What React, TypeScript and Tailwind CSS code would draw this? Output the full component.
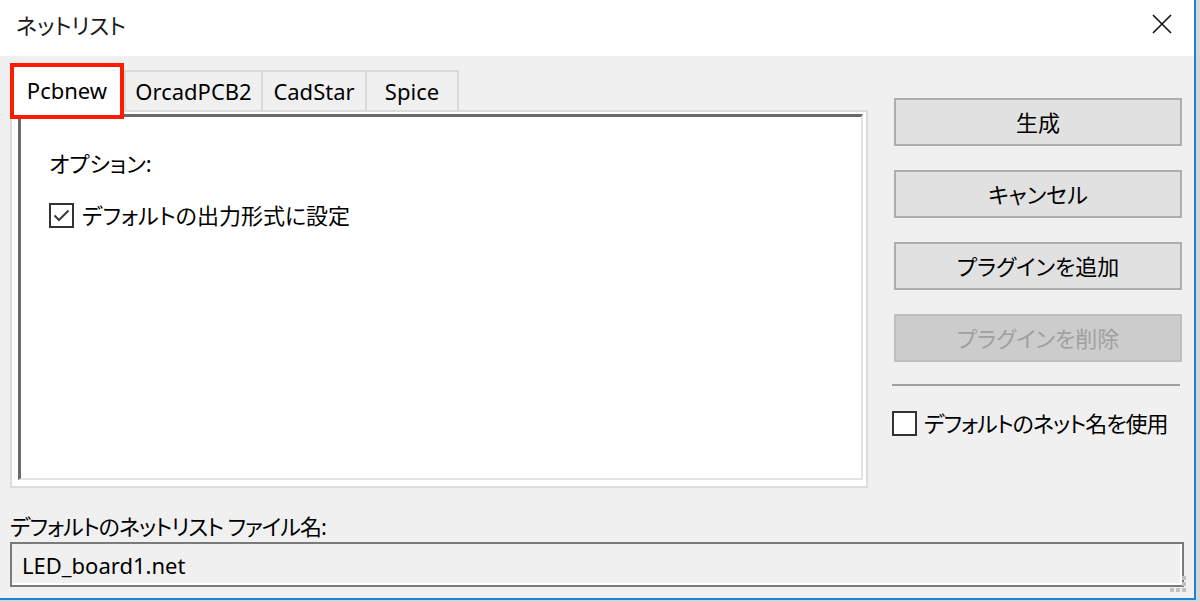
import React from "react";

const jp = "[font-feature-settings:'palt'] whitespace-nowrap";

const Checkbox = ({ checked }: { checked?: boolean }) => (
  <span className="w-[25px] h-[25px] border-2 border-[#333333] bg-white flex items-center justify-center shrink-0">
    {checked && (
      <svg width="17" height="13" viewBox="0 0 17 13">
        <path d="M1.5 6.5 L6 11 L15.5 1.5" fill="none" stroke="#3a3a3a" strokeWidth="2" />
      </svg>
    )}
  </span>
);

const Button = ({ label, disabled }: { label: string; disabled?: boolean }) => (
  <div
    className={
      disabled
        ? "h-[48px] w-[288px] ml-[2px] border-2 border-[#bfbfbf] bg-[#cccccc] text-[#a0a0a0] flex items-center justify-center"
        : "h-[48px] w-[288px] ml-[2px] border-2 border-[#adadad] bg-[#e1e1e1] text-black flex items-center justify-center"
    }
  >
    <span className={jp}>{label}</span>
  </div>
);

const App = () => {
  return (
    <div
      className="w-[1200px] h-[602px] bg-[#d6d6d6] overflow-hidden text-[22px] leading-[26px] text-black"
      style={{ fontFamily: '"Noto Sans", "Noto Sans CJK JP", sans-serif' }}
    >
      <div className="relative w-[1196px] h-[600px] border-r-2 border-b-2 border-[#1883d7] flex flex-col">
        {/* title bar */}
        <div className="h-[56px] bg-white flex items-center justify-between pl-[16px] pr-[22px] shrink-0">
          <span className={jp + " text-[#1a1a1a] -mt-[6px]"}>ネットリスト</span>
          <svg width="20" height="20" viewBox="0 0 20 20" className="-mt-[8px]">
            <path d="M1 1 L19 19 M19 1 L1 19" stroke="#111111" strokeWidth="1.6" />
          </svg>
        </div>

        {/* body */}
        <div className="flex-1 bg-[#f0f0f0] pl-[10px] flex flex-col">
          <div className="flex gap-[24px]">
            {/* left: notebook */}
            <div className="w-[858px] pt-[7px] flex flex-col">
              <div className="flex items-end h-[47px]">
                <div className="relative z-10 w-[114px] h-[56px] -mb-[9px] border-[4px] border-[#ff1a00] bg-white flex justify-center pt-[10px]">
                  Pcbnew
                </div>
                <div className="w-[139px] h-[40px] border-l-2 border-t-2 border-r-2 border-[#d9d9d9] flex items-center justify-center">
                  OrcadPCB2
                </div>
                <div className="w-[104px] h-[40px] border-t-2 border-r-2 border-[#d9d9d9] flex items-center justify-center">
                  CadStar
                </div>
                <div className="w-[92px] h-[40px] border-t-2 border-r-2 border-[#d9d9d9] flex items-center justify-center">
                  Spice
                </div>
              </div>
              <div className="h-[378px] border-2 border-[#dcdcdc] bg-white pl-[6px] pt-[2px] pr-[3px] pb-[6px]">
                <div className="h-full border-t-[3px] border-l-[3px] border-[#6b6b6b] border-r-2 border-b-2 border-r-[#e3e3e3] border-b-[#e3e3e3] pl-[28px] pt-[33px]">
                  <div className={jp}>オプション:</div>
                  <div className="flex items-center gap-[8px] mt-[26px]">
                    <Checkbox checked />
                    <span className={jp}>デフォルトの出力形式に設定</span>
                  </div>
                </div>
              </div>
            </div>

            {/* right: buttons */}
            <div className="w-[290px] pt-[42px] flex flex-col gap-[24px]">
              <Button label="生成" />
              <Button label="キャンセル" />
              <Button label="プラグインを追加" />
              <Button label="プラグインを削除" disabled />
              <div className="flex flex-col gap-[24px] -mt-[2px]">
                <div className="h-[2px] bg-[#a0a0a0] mr-[2px]" />
                <div className="flex items-center gap-[7px]">
                  <Checkbox />
                  <span className={jp + " tracking-[-1px]"}>デフォルトのネット名を使用</span>
                </div>
              </div>
            </div>
          </div>

          {/* bottom: file name */}
          <div className={jp + " tracking-[-1px] mt-[25px]"}>デフォルトのネットリスト ファイル名:</div>
          <div className="mt-[3px] w-[1174px] h-[45px] border-2 border-[#7a7a7a] shadow-[inset_-2px_-2px_0_#ffffff] flex items-center pl-[10px]">
            LED_board1.net
          </div>
        </div>

        {/* resize grip */}
        <svg width="18" height="18" viewBox="0 0 18 18" className="absolute right-[6px] bottom-[4px]">
          <rect x="12" y="0" width="4" height="4" fill="#c2c2c2" />
          <rect x="12" y="6" width="4" height="4" fill="#c2c2c2" />
          <rect x="0" y="12" width="4" height="4" fill="#c2c2c2" />
          <rect x="6" y="12" width="4" height="4" fill="#c2c2c2" />
          <rect x="12" y="12" width="4" height="4" fill="#c2c2c2" />
        </svg>
      </div>
    </div>
  );
};

export default App;
